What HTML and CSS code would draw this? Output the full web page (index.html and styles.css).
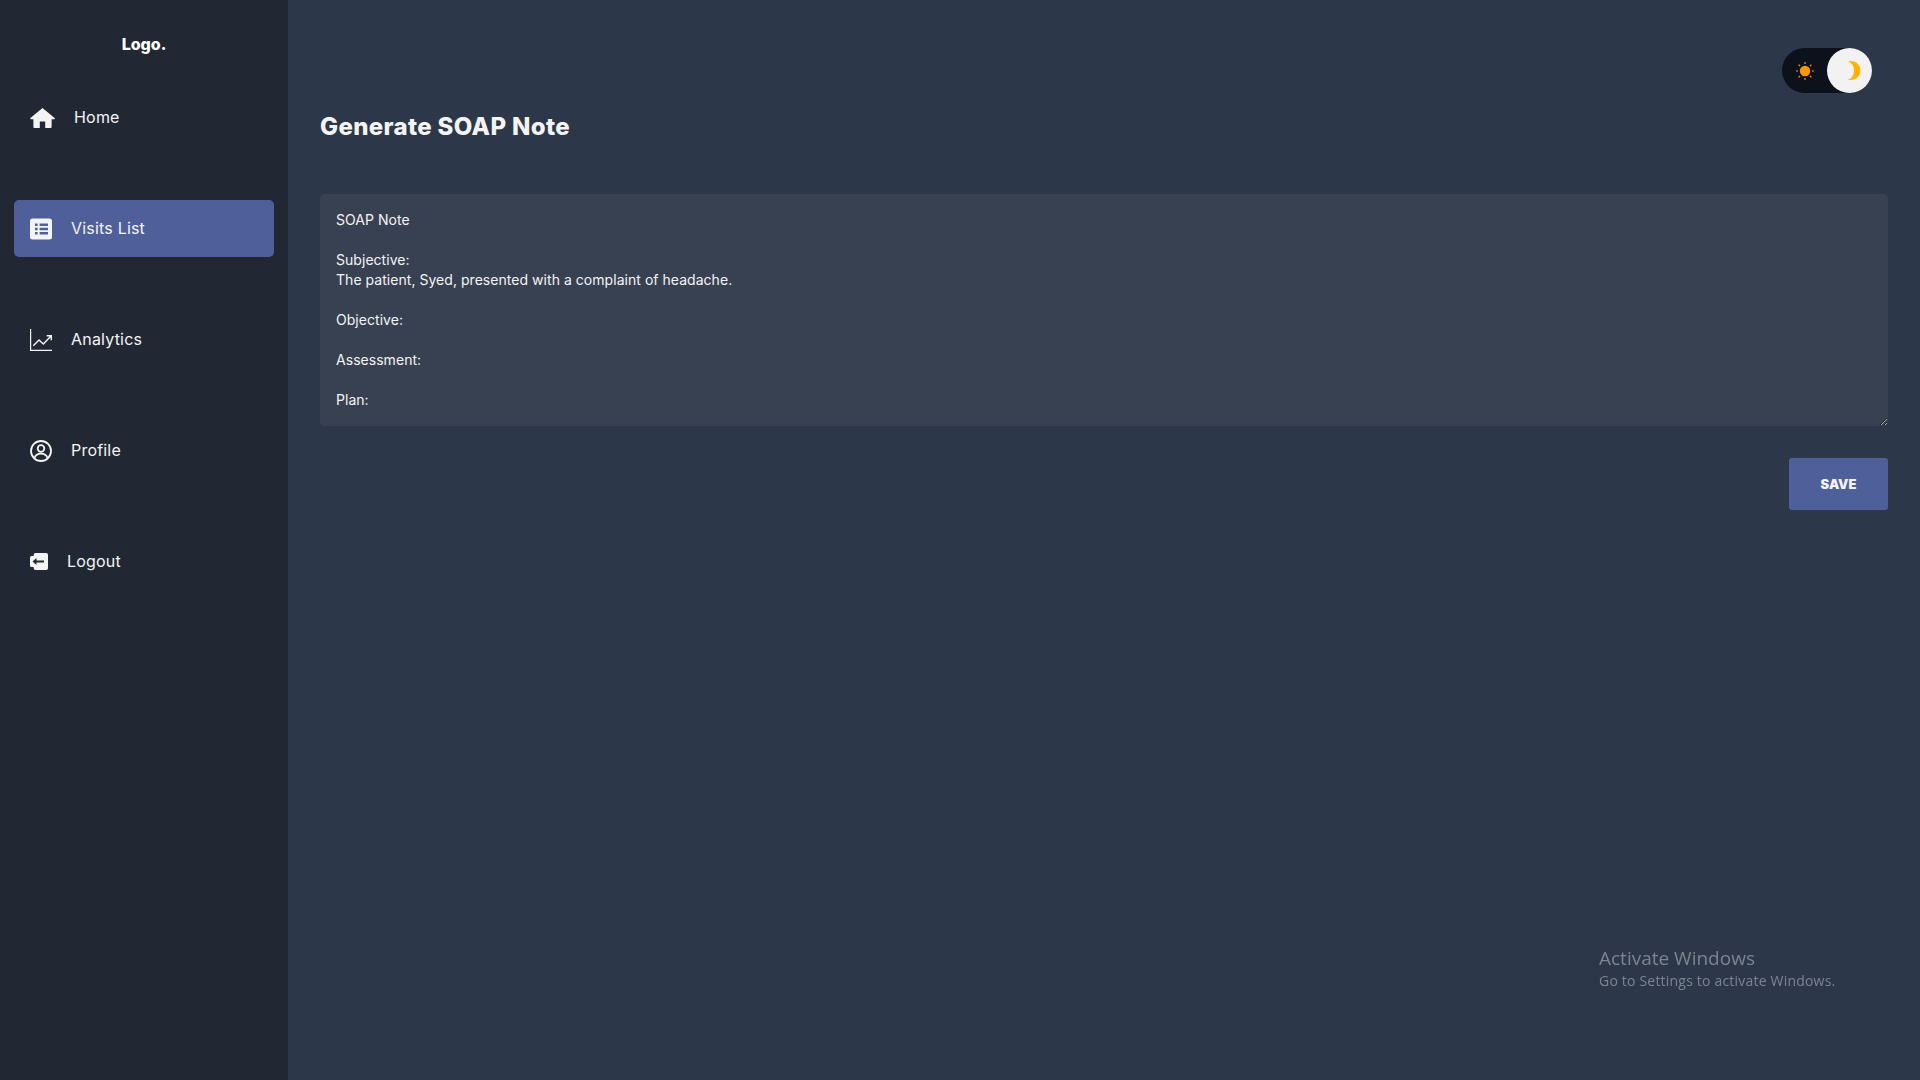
FILE: index.html
```html
<!DOCTYPE html>
<html lang="en">
<head>
    <meta charset="UTF-8">
    <meta name="viewport" content="width=device-width, initial-scale=1.0">
    <title>Generate SOAP Note</title>
    <link rel="stylesheet" href="styles.css">
</head>
<body>
    <div class="layout">
        <aside class="sidebar">
            <div class="logo">Logo.</div>
            <nav class="nav">
                <a class="nav-item nav-home" href="#">
                    <svg class="icon icon-home" viewBox="0 0 25 20"><path fill="#f4f4f4" d="M12.500 0 .4 10c-.5.5-.2 1.200.5 1.200h2.500v7.500c0 .7.5 1.300 1.200 1.300h5.200v-6.500h5.400V20h5.200c.7 0 1.200-.6 1.200-1.300v-7.500h2.500c.7 0 1-.7.500-1.200L12.500 0Z"/></svg>
                    <span>Home</span>
                </a>
                <a class="nav-item active" href="#">
                    <svg class="icon icon-square" viewBox="0 0 22 21"><path fill="#f4f4f4" fill-rule="evenodd" d="M2.500 0h17A2.500 2.500 0 0 1 22 2.500v16a2.500 2.500 0 0 1-2.500 2.500h-17A2.500 2.500 0 0 1 0 18.500v-16A2.500 2.500 0 0 1 2.500 0ZM5 5v2.600h2.600V5H5Zm4.600 0v2.600H18V5H9.600ZM5 9.200v2.600h2.600V9.200H5Zm4.600 0v2.600H18V9.200H9.600ZM5 13.400V16h2.600v-2.600H5Zm4.600 0V16H18v-2.600H9.600Z"/></svg>
                    <span>Visits List</span>
                </a>
                <a class="nav-item" href="#">
                    <svg class="icon icon-square" viewBox="0 0 22 22"><path fill="none" stroke="#f4f4f4" stroke-width="1.200" d="M.6 0v21.400H22"/><path fill="none" stroke="#f4f4f4" stroke-width="1.400" d="M3.300 16.700 9 11l4.300 4 8-8.300M16.700 6.700h4.600v4.600"/></svg>
                    <span>Analytics</span>
                </a>
                <a class="nav-item" href="#">
                    <svg class="icon icon-square" viewBox="0 0 22 22"><circle cx="11" cy="11" r="10" fill="none" stroke="#f4f4f4" stroke-width="1.800"/><circle cx="11" cy="8.500" r="3.300" fill="none" stroke="#f4f4f4" stroke-width="1.800"/><path fill="none" stroke="#f4f4f4" stroke-width="1.800" d="M4.500 18c1-3 3.500-4.300 6.500-4.300s5.500 1.300 6.500 4.300"/></svg>
                    <span>Profile</span>
                </a>
                <a class="nav-item" href="#">
                    <svg class="icon icon-logout" viewBox="0 0 18 17"><path fill="#f4f4f4" fill-rule="evenodd" d="M5.500 0h10.700A1.800 1.800 0 0 1 18 1.800v13.400a1.800 1.800 0 0 1-1.800 1.800H5.500a1.800 1.800 0 0 1-1.800-1.800V14H1.500A1.500 1.500 0 0 1 0 12.500v-8A1.500 1.500 0 0 1 1.500 3h2.200V1.800A1.800 1.800 0 0 1 5.500 0ZM6.500 5 2.500 8.500l4 3.500V9.400h7.500V7.600H6.500V5Z"/></svg>
                    <span>Logout</span>
                </a>
            </nav>
        </aside>

        <main class="content">
            <div class="topbar">
                <div class="theme-toggle">
                    <svg class="sun" viewBox="0 0 18 18">
                        <circle cx="9" cy="9" r="5.200" fill="#ff9800"/>
                        <path stroke="#ff9800" stroke-width="1.200" d="M9 0v2M9 16v2M0 9h2M16 9h2M2.600 2.600 4 4M14 14l1.400 1.400M2.600 15.400 4 14M14 4l1.400-1.400"/>
                    </svg>
                    <div class="thumb">
                        <svg class="moon" viewBox="0 0 13 19"><path fill="#ffb300" d="M0 .2C.8 0 1.600 0 2.500 0 8.200 0 12.500 4.200 12.500 9.500S8.200 19 2.500 19c-.9 0-1.700 0-2.500-.2C3.700 17.500 6 13.800 6 9.500S3.700 1.500 0 .2Z"/></svg>
                    </div>
                </div>
            </div>
            <h1 class="title">Generate SOAP Note</h1>
            <textarea class="note" rows="10" readonly>SOAP Note

Subjective:
The patient, Syed, presented with a complaint of headache.

Objective:

Assessment:

Plan:</textarea>
            <div class="actions">
                <button class="save-btn" type="button">SAVE</button>
            </div>
        </main>
    </div>

    <div class="watermark">
        <div class="watermark-title">Activate Windows</div>
        <div class="watermark-sub">Go to Settings to activate Windows.</div>
    </div>
</body>
</html>
```

FILE: styles.css
```css
* {
    box-sizing: border-box;
}

body {
    margin: 0;
    background: #2c3849;
    color: #f4f4f4;
    font-family: Inter, "Liberation Sans", sans-serif;
}

.layout {
    display: flex;
    height: 1080px;
}

.sidebar {
    width: 288px;
    flex-shrink: 0;
    padding: 0 14px;
    background: #212833;
}

.logo {
    height: 89px;
    padding-top: 33px;
    font-size: 16px;
    line-height: 22px;
    font-weight: 800;
    text-align: center;
    color: #fff;
}

.nav {
    display: flex;
    flex-direction: column;
    gap: 54px;
}

.nav-item {
    display: flex;
    align-items: center;
    gap: 19px;
    height: 57px;
    padding-left: 16px;
    padding-bottom: 2px;
    border-radius: 5px;
    font-size: 16px;
    letter-spacing: 0.2px;
    color: #f4f4f4;
    text-decoration: none;
}

.nav-item .icon {
    margin-top: 2px;
}

.nav-item.active {
    background: #4f5f99;
}

.icon {
    flex-shrink: 0;
}

.icon-home {
    width: 25px;
    height: 20px;
}

.icon-square {
    width: 22px;
    height: 22px;
}

.icon-logout {
    width: 18px;
    height: 17px;
}

.content {
    flex: 1;
    padding: 0 32px;
}

.topbar {
    display: flex;
    justify-content: flex-end;
    padding: 48px 16px 0 0;
}

.theme-toggle {
    display: flex;
    align-items: center;
    justify-content: space-between;
    width: 90px;
    height: 45px;
    padding-left: 14px;
    border-radius: 23px;
    background: #0d111c;
}

.sun {
    width: 18px;
    height: 18px;
}

.thumb {
    display: flex;
    align-items: center;
    justify-content: center;
    width: 45px;
    height: 45px;
    padding-left: 10px;
    border-radius: 50%;
    background: #f2f2f2;
}

.moon {
    width: 13px;
    height: 19px;
}

.title {
    margin: 16px 0 0;
    font-size: 24px;
    line-height: 36px;
    font-weight: 800;
    letter-spacing: 0.35px;
    color: #f4f4f4;
}

.note {
    display: block;
    width: 100%;
    height: 232px;
    margin-top: 49px;
    padding: 16px;
    border: 0;
    border-radius: 5px;
    outline: none;
    background: #384152;
    color: #f4f4f4;
    font-family: Inter, "Liberation Sans", sans-serif;
    font-size: 14px;
    line-height: 20px;
    letter-spacing: 0.04px;
}

.actions {
    display: flex;
    justify-content: flex-end;
    margin-top: 32px;
}

.save-btn {
    width: 99px;
    height: 52px;
    border: 0;
    border-radius: 3px;
    background: #4f5f99;
    color: #f4f4f4;
    font-family: Inter, "Liberation Sans", sans-serif;
    font-size: 13px;
    font-weight: 900;
}

/* windows overlay */
.watermark {
    position: fixed;
    left: 1599px;
    top: 945px;
    color: #7d848f;
    font-family: "Open Sans", sans-serif;
}

.watermark-title {
    font-size: 19px;
    line-height: 26px;
}

.watermark-sub {
    font-size: 14px;
    line-height: 20px;
    letter-spacing: 0.2px;
}
```
